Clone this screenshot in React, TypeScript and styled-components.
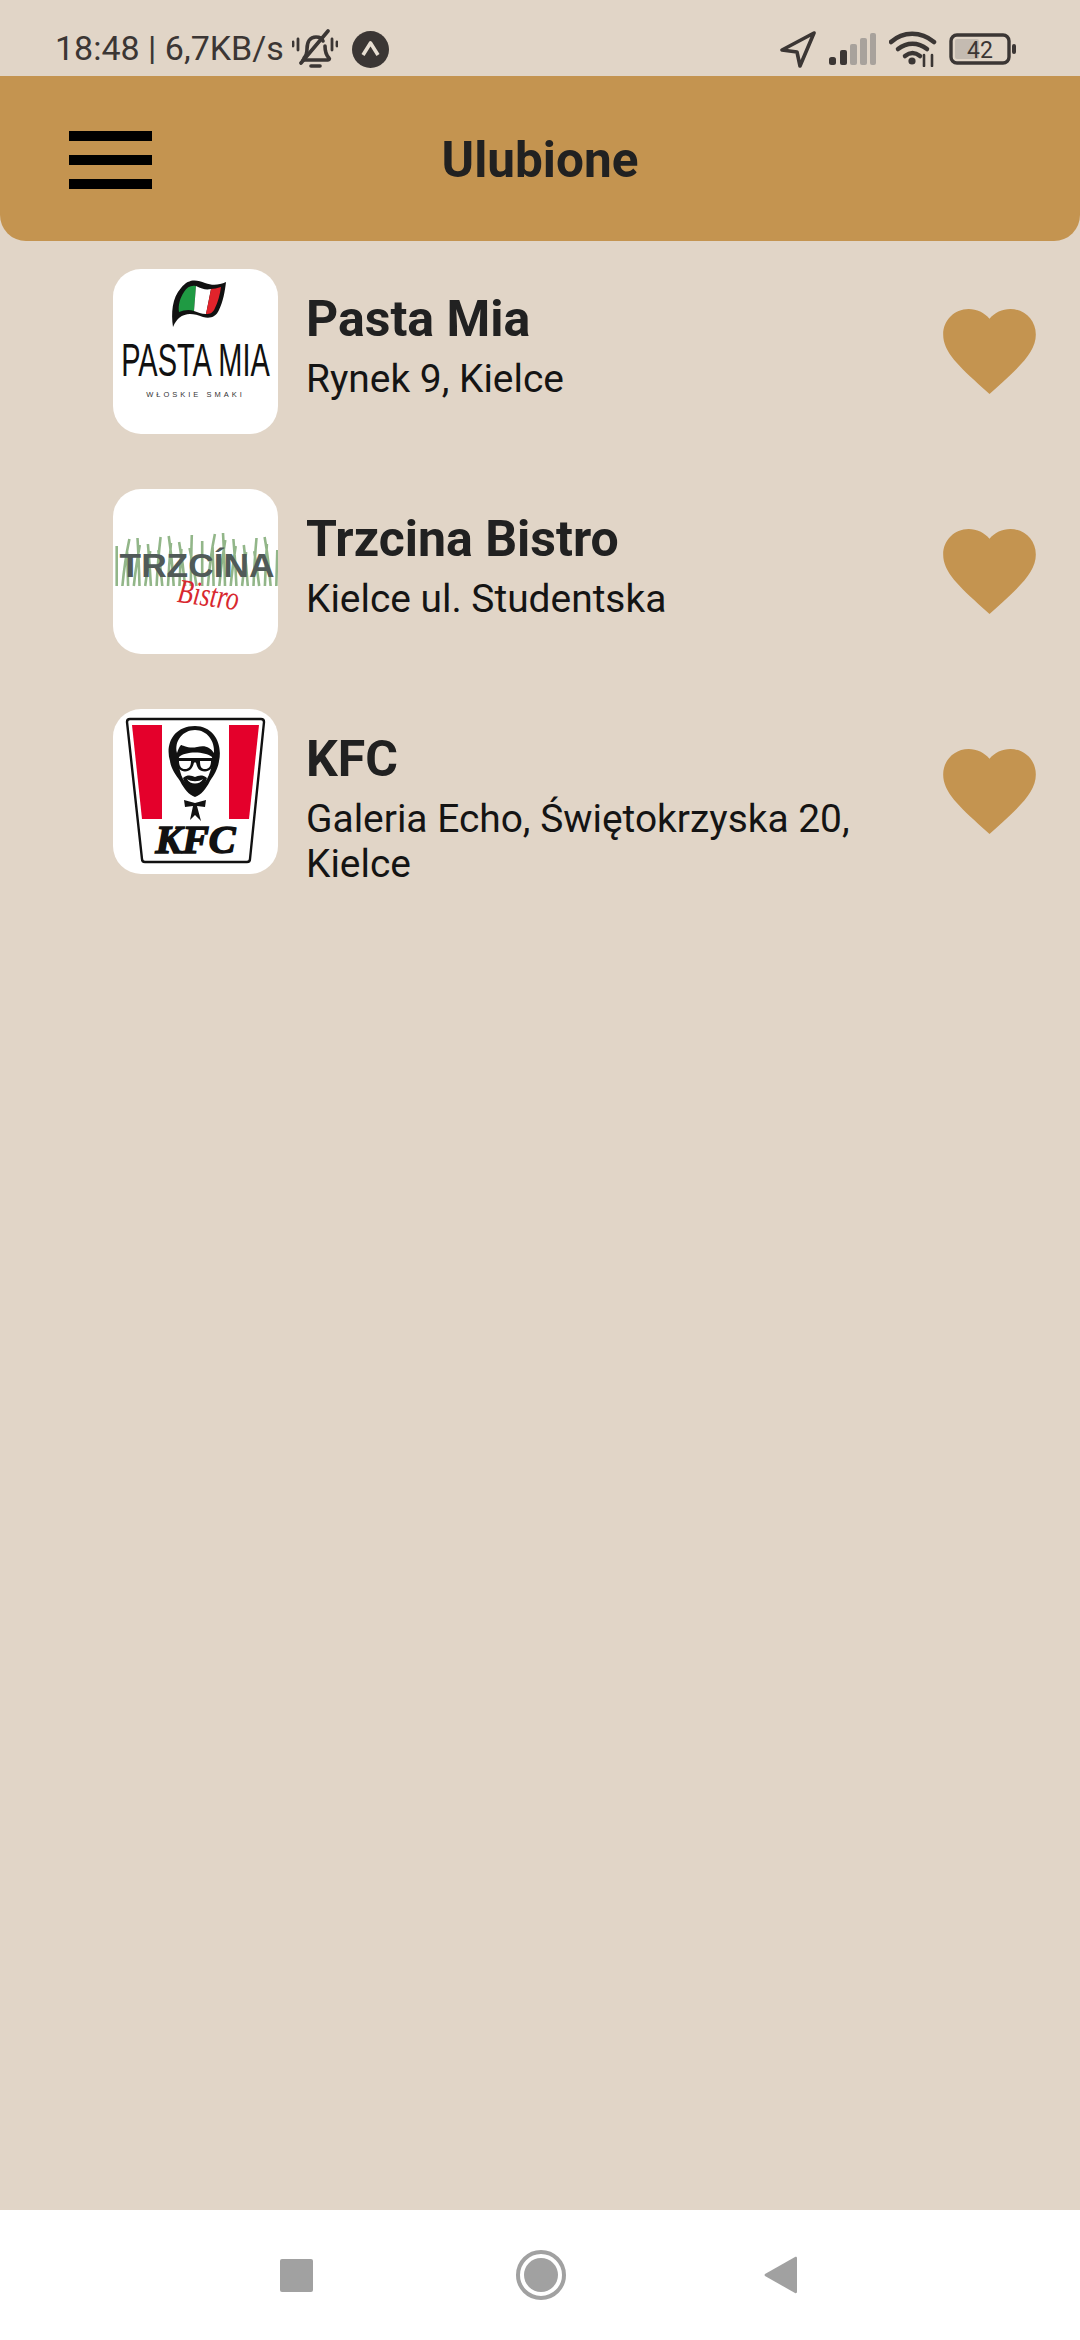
import React from "react";
import styled, { createGlobalStyle } from "styled-components";

const Global = createGlobalStyle`
  html, body { margin: 0; padding: 0; background: #e1d5c7; }
  #root { width: 1080px; height: 2340px; }
  * { box-sizing: border-box; }
`;

const Page = styled.div`
  width: 1080px;
  height: 2340px;
  display: flex;
  flex-direction: column;
  background: #e1d5c7;
  font-family: Roboto, "Noto Sans", sans-serif;
  overflow: hidden;
`;

const StatusBar = styled.div`
  height: 76px;
  flex: none;
  display: flex;
  align-items: center;
  justify-content: space-between;
  padding: 22px 63px 0 55px;
  color: #3b3634;
`;

const StatusGroup = styled.div<{ $gap: number }>`
  display: flex;
  align-items: center;
  gap: ${(p) => p.$gap}px;
`;

const StatusText = styled.span`
  font-size: 34px;
  line-height: 40px;
  white-space: nowrap;
  margin-top: -2px;
`;

const Header = styled.header`
  height: 165px;
  flex: none;
  position: relative;
  display: flex;
  align-items: center;
  justify-content: center;
  background: #c49450;
  border-radius: 0 0 26px 26px;
`;

const MenuButton = styled.div`
  position: absolute;
  left: 69px;
  top: 55px;
  width: 83px;
  display: flex;
  flex-direction: column;
  gap: 14px;
`;

const MenuLine = styled.span`
  display: block;
  height: 10px;
  background: #000;
`;

const Title = styled.h1`
  margin: 3px 0 0;
  font-size: 49.5px;
  line-height: 56px;
  font-weight: 700;
  color: #212121;
`;

const List = styled.main`
  flex: 1;
  display: flex;
  flex-direction: column;
  gap: 55px;
  padding: 28px 44px 0 113px;
`;

const Row = styled.article`
  display: grid;
  grid-template-columns: 165px 1fr 93px;
  column-gap: 28px;
  align-items: flex-start;
`;

const LogoBox = styled.div`
  width: 165px;
  height: 165px;
  border-radius: 28px;
  background: #fff;
  overflow: hidden;
  display: block;
  svg { display: block; }
`;

const Info = styled.div`
  display: flex;
  flex-direction: column;
  padding-top: 20px;
  padding-right: 60px;
  min-width: 0;
`;

const Name = styled.h2`
  margin: 0 0 7px;
  font-size: 50px;
  line-height: 60px;
  font-weight: 700;
  color: #212121;
`;

const Address = styled.p`
  margin: 0;
  font-size: 38.9px;
  line-height: 45px;
  font-weight: 400;
  color: #141414;
`;

const HeartWrap = styled.div`
  height: 165px;
  display: flex;
  align-items: center;
`;

const NavBar = styled.nav`
  height: 130px;
  flex: none;
  background: #fff;
  position: relative;
  display: flex;
  align-items: center;
  padding-left: 280px;
`;

const NavSquare = styled.span`
  width: 33px;
  height: 33px;
  border-radius: 2px;
  background: #a1a1a1;
  margin-right: 203px;
`;

const NavCircle = styled.span`
  width: 50px;
  height: 50px;
  border-radius: 50%;
  border: 4px solid #a1a1a1;
  display: flex;
  align-items: center;
  justify-content: center;
  margin-right: 197px;
  &::after {
    content: "";
    width: 34px;
    height: 34px;
    border-radius: 50%;
    background: #a1a1a1;
  }
`;

const BellIcon = () => (
  <svg width="46" height="40" viewBox="0 0 46 40" fill="none" stroke="#3b3634" strokeWidth="3.6" strokeLinecap="round" strokeLinejoin="round">
    <path d="M12 29c2-2 3-4 3-9 0-7 3-12 9-12 3 0 6 1 7 4M33 17c0 6 1 9 4 12 1 1 0 2-1 2H11" />
    <path d="M9 34 36 2" strokeWidth="3.6" />
    <path d="M19 37h9" strokeWidth="3.6" />
    <path d="M1 13v4M6 10v11M40 10v11M45 13v4" strokeWidth="2.8" />
  </svg>
);

const ExpoIcon = () => (
  <svg width="37" height="37" viewBox="0 0 37 37">
    <circle cx="18.5" cy="18.5" r="18.5" fill="#3b3634" />
    <path d="M11 24 18.5 12 26 24" fill="none" stroke="#e8ded2" strokeWidth="3.6" strokeLinejoin="round" />
  </svg>
);

const LocationIcon = () => (
  <svg width="38" height="38" viewBox="0 0 38 38" fill="none" stroke="#3b3634" strokeWidth="3.6" strokeLinejoin="round">
    <path d="M35 3 3 20l15 2 3 14z" />
  </svg>
);

const SignalIcon = () => (
  <svg width="48" height="32" viewBox="0 0 48 32">
    <rect x="0" y="24" width="7" height="8" rx="2.5" fill="#3b3634" />
    <rect x="11" y="17" width="7" height="15" rx="2" fill="#3b3634" />
    <rect x="21" y="11" width="7" height="21" rx="2" fill="#a8a29c" />
    <rect x="31" y="5" width="7" height="27" rx="2" fill="#a8a29c" />
    <rect x="41" y="0" width="6" height="32" rx="2" fill="#a8a29c" />
  </svg>
);

const WifiIcon = () => (
  <svg width="48" height="36" viewBox="0 0 48 36" fill="none" stroke="#3b3634" strokeLinecap="round">
    <path d="M2 11C14 0 32 0 45 11" strokeWidth="4.5" />
    <path d="M9 18c9-7 20-7 29 0" strokeWidth="4.5" />
    <path d="M16 25c5-4 10-4 15 0" strokeWidth="4.5" />
    <circle cx="23" cy="30" r="3.6" fill="#3b3634" stroke="none" />
    <path d="M35 24v11M43 24v11" strokeWidth="2.6" />
  </svg>
);

const BatteryIcon = () => (
  <svg width="68" height="32" viewBox="0 0 68 32">
    <rect x="2" y="2" width="58" height="28" rx="6" fill="none" stroke="#3b3634" strokeWidth="3.4" />
    <rect x="6" y="6" width="24" height="20" rx="2" fill="#c4bbb1" />
    <rect x="63" y="11" width="4" height="10" rx="2" fill="#3b3634" />
    <text x="31" y="25" textAnchor="middle" fontFamily="Roboto, sans-serif" fontSize="23" fill="#3b3634">42</text>
  </svg>
);

const Heart = () => (
  <svg width="93" height="85" viewBox="2 3 20 18.35" aria-hidden="true">
    <path fill="#c49450" d="M12 21.35l-1.45-1.32C5.4 15.36 2 12.28 2 8.5 2 5.42 4.42 3 7.5 3c1.74 0 3.41.81 4.5 2.09C13.09 3.81 14.76 3 16.5 3 19.58 3 22 5.42 22 8.5c0 3.78-3.4 6.86-8.55 11.54L12 21.35z" />
  </svg>
);

const PastaLogo = () => (
  <svg width="165" height="165" viewBox="0 0 165 165">
    <path d="M68 19C76 9 84 11 92 14c8 3 14 2 21-1-1 9-3 20-7 28-3 7-9 9-16 7-9-3-16-5-24 1-2 2-4 4-6 9-2-14-1-29 8-39z" fill="#111" />
    <path d="M71 23c3-5 7-7 12-6l-2 25c-5-2-10-1-15 1-1-7 1-14 5-20z" fill="#1f9a43" />
    <path d="M83 17c6 3 10 4 15 3l-5 25c-5 0-8-2-12-3z" fill="#fff" />
    <path d="M98 20c3 0 6-1 10-2-1 7-3 15-6 21-2 5-5 6-9 6z" fill="#e2232b" />
    <text transform="translate(82.5 107) scale(0.63 1)" textAnchor="middle" fontFamily="'Liberation Sans', sans-serif" fontSize="46" fill="#111">PASTA MIA</text>
    <text x="82.5" y="128" textAnchor="middle" fontFamily="'Liberation Sans', sans-serif" fontSize="7.5" letterSpacing="3" fill="#333">WŁOSKIE SMAKI</text>
  </svg>
);

const grassBlades = Array.from({ length: 30 }, (_, i) => {
  const x = i * 5.7 - 2;
  const lean = ((i * 7) % 15) - 7;
  const top = 44 + ((i * 13) % 20);
  return `M${x} 97 Q${x + lean / 3} ${top + 22} ${x + lean} ${top}`;
}).join(" ");

const TrzcinaLogo = () => (
  <svg width="165" height="165" viewBox="0 0 165 165">
    <defs>
      <filter id="soft" x="-5%" y="-5%" width="110%" height="110%">
        <feGaussianBlur stdDeviation="0.6" />
      </filter>
    </defs>
    <path d={grassBlades} fill="none" stroke="#78a56c" strokeWidth="2.6" opacity="0.8" filter="url(#soft)" />
    <text transform="translate(84 88) scale(1.07 1)" textAnchor="middle" fontFamily="'Liberation Sans', sans-serif" fontWeight="700" fontSize="33" fill="#505a58">TRZCÍNA</text>
    <text transform="translate(94 117) rotate(8) scale(0.75 1)" textAnchor="middle" fontFamily="'Liberation Serif', serif" fontStyle="italic" fontSize="34" fill="#d8282f">Bistro</text>
  </svg>
);

const KfcLogo = () => (
  <svg width="165" height="165" viewBox="0 0 165 165">
    <path d="M17 10h131c2 0 3 1 3 3l-14 137c0 2-1 3-3 3H32c-2 0-3-1-3-3L14 13c0-2 1-3 3-3z" fill="#fff" stroke="#111" strokeWidth="2.4" />
    <path d="M19 16h30v94H29z" fill="#e4002b" />
    <path d="M116 16h30l-10 94h-20z" fill="#e4002b" />
    <path d="M57 52C52 36 60 17 82 17c18 0 28 17 24 35-1 8-5 14-9 20-4 8-9 14-15 16-6-2-11-8-15-16-4-6-9-12-10-20z" fill="#111" />
    <path d="M64 44C61 32 70 21 82 21c12 0 20 11 19 23-4-6-9-8-17-6-8 2-15-2-16-2-2 2-3 5-4 8z" fill="#fff" />
    <path d="M66 48c6-6 26-6 33 0 1 8-2 16-5 22-4 6-8 12-12 14-4-2-8-8-12-14-3-6-5-14-4-22z" fill="#fff" />
    <path d="M61 49h43v2.500h-3c-1 7-4 11-9 11-6 0-8-4-9-9h-2c-1 5-4 9-9 9-5 0-8-4-9-11h-2z" fill="#111" />
    <path d="M66 52h12c0 5-2 8-6 8s-6-3-6-8zM87 52h11c0 5-2 8-6 8s-5-3-5-8z" fill="#fff" />
    <path d="M70 69c5-4 9-2 12-1 3-1 7-3 12 1-2 7-7 15-12 18-5-3-10-11-12-18z" fill="#111" />
    <path d="M74 70c4 3 12 3 16 0-3 6-13 6-16 0z" fill="#fff" />
    <path d="M71 91l11 3 11-3-1 7-8-1 4 15-6-6-5 5 3-14-8 1z" fill="#111" />
    <text x="82.5" y="144" textAnchor="middle" fontFamily="'Liberation Serif', serif" fontStyle="italic" fontWeight="700" fontSize="40" fill="#111" stroke="#111" strokeWidth="1.6">KFC</text>
  </svg>
);

const restaurants = [
  { name: "Pasta Mia", address: "Rynek 9, Kielce", Logo: PastaLogo },
  { name: "Trzcina Bistro", address: "Kielce ul. Studentska", Logo: TrzcinaLogo },
  { name: "KFC", address: "Galeria Echo, Świętokrzyska 20, Kielce", Logo: KfcLogo },
];

export default function App() {
  return (
    <Page>
      <Global />
      <StatusBar>
        <StatusGroup $gap={14}>
          <StatusGroup $gap={8}>
            <StatusText>18:48 | 6,7KB/s</StatusText>
            <BellIcon />
          </StatusGroup>
          <ExpoIcon />
        </StatusGroup>
        <StatusGroup $gap={12}>
          <LocationIcon />
          <SignalIcon />
          <WifiIcon />
          <BatteryIcon />
        </StatusGroup>
      </StatusBar>
      <Header>
        <MenuButton>
          <MenuLine />
          <MenuLine />
          <MenuLine />
        </MenuButton>
        <Title>Ulubione</Title>
      </Header>
      <List>
        {restaurants.map(({ name, address, Logo }) => (
          <Row key={name}>
            <LogoBox>
              <Logo />
            </LogoBox>
            <Info>
              <Name>{name}</Name>
              <Address>{address}</Address>
            </Info>
            <HeartWrap>
              <Heart />
            </HeartWrap>
          </Row>
        ))}
      </List>
      <NavBar>
        <NavSquare />
        <NavCircle />
        <svg width="34" height="38" viewBox="0 0 34 38">
          <path d="M32 1 2 18a1.500 1.500 0 0 0 0 2l30 17c1 .5 2 0 2-1V2c0-1-1-1.500-2-1z" fill="#a1a1a1" />
        </svg>
      </NavBar>
    </Page>
  );
}
